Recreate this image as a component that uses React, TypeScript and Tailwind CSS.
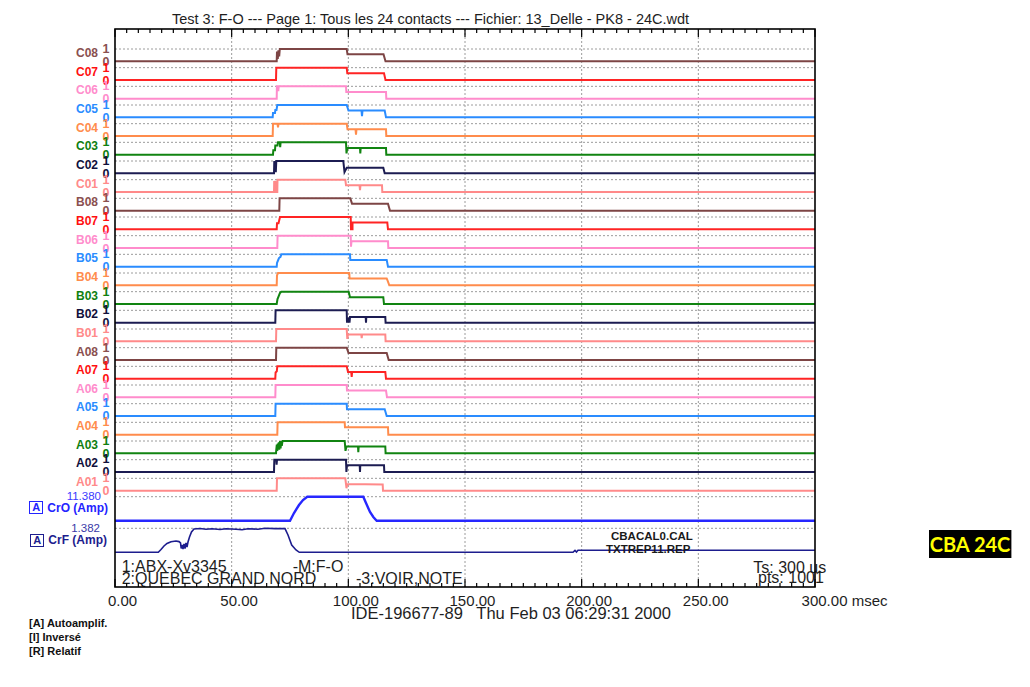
import React from "react";

type Pt = [number, number];

// coordonnées absolues de la page -> repère local du tracé
const X0 = 115;
const Y0 = 29;
const ROW = 18.667;
const HIGH = 12.33;
const W = 700;
const H = 558;

const base = (i: number) => 61.33 + ROW * i - Y0;

const PALETTE = [
  { stroke: "#7d4545", text: "text-[#8a5050]" },
  { stroke: "#ff2424", text: "text-[#ff1010]" },
  { stroke: "#ff8ccc", text: "text-[#ff8ccc]" },
  { stroke: "#2a8cff", text: "text-[#2a8cff]" },
  { stroke: "#ff8c4c", text: "text-[#ff8c4c]" },
  { stroke: "#118411", text: "text-[#108010]" },
  { stroke: "#1c1c52", text: "text-[#10103c]" },
  { stroke: "#ff8a8a", text: "text-[#ff8a8a]" },
];

// points [x absolu, niveau] ; 0 = repos, 1 = haut
const WAVES: Pt[][] = [
  // C08
  [[115, 0], [276.7, 0], [277, 0.8], [277.8, 0.2], [278.4, 0.9], [279.2, 0.4], [279.8, 1], [346.7, 1], [347.5, 0.57], [383.5, 0.57], [385.5, 0], [815, 0]],
  // C07
  [[115, 0], [276, 0], [276.3, 1], [346.7, 1], [347.3, 0.55], [384, 0.55], [385.5, 0], [815, 0]],
  // C06
  [[115, 0], [276.7, 0], [276.9, 1], [278, 1], [278.3, 0.6], [278.7, 1], [346, 1], [346.3, 0.55], [386, 0.55], [386.3, 0], [815, 0]],
  // C05
  [[115, 0], [272.7, 0], [273, 0.35], [275, 0.35], [275.3, 0.6], [276.5, 0.6], [277.3, 1], [346.7, 1], [348.5, 0.55], [361.5, 0.55], [362, 0.1], [362.5, 0.55], [384.7, 0.55], [386, 0], [815, 0]],
  // C04
  [[115, 0], [272.7, 0], [273, 1], [277.5, 1], [278, 0.7], [278.5, 1], [346.7, 1], [347.5, 0.55], [355.5, 0.55], [356, 0.1], [356.5, 0.55], [386, 0.55], [386.3, 0], [815, 0]],
  // C03
  [[115, 0], [273, 0], [273.3, 0.35], [275, 0.35], [275.3, 0.75], [277.5, 0.75], [278, 1], [279.8, 1], [280.2, 0.6], [280.6, 1], [346, 1], [346.5, 0.1], [347.3, 0.55], [360, 0.55], [360.3, 0.1], [360.7, 0.55], [386, 0.55], [386.3, 0], [815, 0]],
  // C02
  [[115, 0], [274, 0], [274.3, 1], [274.8, 0.1], [275.3, 1], [275.8, 0.1], [276.3, 1], [343.3, 1], [344.5, 0.1], [346.7, 0.45], [383.3, 0.45], [384.7, 0], [815, 0]],
  // C01
  [[115, 0], [274, 0], [274.2, 0.9], [274.6, 0], [275.2, 0], [275.4, 0.9], [275.8, 0], [277.3, 0], [277.5, 1], [345.3, 1], [346, 0.55], [359.5, 0.55], [360, 0.15], [360.5, 0.55], [382, 0.55], [382.3, 0], [815, 0]],
  // B08
  [[115, 0], [279.3, 0], [279.6, 1], [350.3, 1], [352, 0.57], [388, 0.57], [390, 0], [815, 0]],
  // B07
  [[115, 0], [276.7, 0], [277, 0.5], [278.5, 0.5], [280, 1], [350.7, 1], [351, 0], [352.5, 0], [352.5, 0.55], [387.3, 0.55], [388, 0], [815, 0]],
  // B06
  [[115, 0], [277.3, 0], [277.6, 1], [350.7, 1], [351, 0.1], [351.5, 0.55], [388, 0.55], [388.3, 0], [815, 0]],
  // B05
  [[115, 0], [276.7, 0], [277, 0.3], [278, 0.5], [279, 0.7], [280.5, 0.8], [281.3, 1], [350, 1], [350.3, 0.55], [386.7, 0.55], [388, 0], [815, 0]],
  // B04
  [[115, 0], [276.7, 0], [277, 0.8], [278, 1], [349.3, 1], [349.6, 0.55], [386.7, 0.55], [387.5, 0.4], [389.3, 0], [815, 0]],
  // B03
  [[115, 0], [276.7, 0], [277.5, 0.4], [279, 0.7], [280, 0.9], [281.3, 1], [348.7, 1], [350, 0.55], [383.3, 0.55], [384, 0], [815, 0]],
  // B02
  [[115, 0], [275.3, 0], [275.6, 1], [346.7, 1], [347, 0], [347.7, 0.4], [348.3, 0], [348.9, 0.4], [349.5, 0], [350, 0.45], [365.7, 0.45], [366, 0], [366.3, 0.45], [385.3, 0.45], [385.6, 0], [815, 0]],
  // B01
  [[115, 0], [276, 0], [276.3, 1], [346.7, 1], [347.3, 0.2], [348, 0.55], [361.3, 0.55], [361.7, 0.25], [362.1, 0.55], [385.3, 0.55], [385.6, 0], [815, 0]],
  // A08
  [[115, 0], [276, 0], [276.3, 1], [346.7, 1], [348.5, 0.57], [386.7, 0.57], [388.7, 0], [815, 0]],
  // A07
  [[115, 0], [275.3, 0], [275.6, 0.5], [276.8, 0.6], [277.3, 1], [346.7, 1], [348, 0.55], [351.2, 0.55], [351.7, 0.15], [352.1, 0.55], [385.3, 0.55], [386, 0], [815, 0]],
  // A06
  [[115, 0], [275.3, 0], [275.6, 1], [346.7, 1], [347, 0.55], [386, 0.55], [387, 0], [815, 0]],
  // A05
  [[115, 0], [275.3, 0], [275.6, 1], [346.7, 1], [347, 0.55], [384.7, 0.55], [386.7, 0], [815, 0]],
  // A04
  [[115, 0], [277.3, 0], [277.6, 1], [344.7, 1], [345, 0.6], [388, 0.6], [388.3, 0], [815, 0]],
  // A03
  [[115, 0], [276, 0], [276.3, 0.3], [276.8, 0.7], [277.3, 0.2], [277.8, 0.8], [278.3, 0.3], [278.8, 0.9], [279.3, 0.3], [280, 1], [280.6, 0.4], [281.2, 1], [281.8, 0.6], [282.5, 1], [344.7, 1], [345.5, 0.2], [346.5, 0.55], [358, 0.55], [358.3, 0.1], [358.7, 0.55], [385.3, 0.55], [385.6, 0], [815, 0]],
  // A02
  [[115, 0], [274, 0], [274.3, 1], [276.2, 1], [276.6, 0.6], [277, 1], [346, 1], [346.4, 0], [347, 0.55], [359.7, 0.55], [360, 0], [360.3, 0.55], [384, 0.55], [384.3, 0], [815, 0]],
  // A01
  [[115, 0], [276.7, 0], [277, 1], [345.3, 1], [346.5, 0.2], [347.3, 0.55], [382.7, 0.5], [383, 0], [815, 0]],
];

const NAMES = ["C", "B", "A"].flatMap((g) => ["08", "07", "06", "05", "04", "03", "02", "01"].map((n) => g + n));

const CRO: Pt[] = [
  [115, 520.7], [290, 520.7], [294, 513], [299, 505], [303, 500], [307.3, 496.7], [363.3, 496.7], [366, 503], [370, 512], [373.3, 517], [376.7, 520.7], [815, 520.7],
];

const CRF: Pt[] = [
  [115, 552.3], [158.3, 552.3], [161, 549.5], [164, 546], [167, 543.5], [171, 541.7], [176, 541], [179, 541.6], [180.5, 543], [181.2, 548.5], [182, 545], [183, 549], [184, 544], [185, 548.5], [186, 543], [187, 547], [188, 542], [189.5, 537], [191.5, 532], [194, 529], [200, 528.5], [206, 529.3], [212, 528.8], [220, 529.5], [226, 528.7], [236, 529.3], [242, 529.7], [248, 528.7], [258, 529.2], [265, 528.3], [275, 528.6], [285, 528.6], [288, 535], [291.7, 545], [296, 550], [299.3, 552.3], [573, 552.3], [575, 550.4], [576.5, 552], [578, 550.3], [815, 550.3],
];

const toPath = (pts: Pt[], y: (v: number) => number) =>
  pts.map(([x, v], k) => `${k ? "L" : "M"}${(x - X0).toFixed(2)},${y(v).toFixed(2)}`).join(" ");

const TICKS = Array.from({ length: 61 }, (_, k) => k);
const GRID_X = [1, 2, 3, 4, 5].map((k) => (k * W) / 6);

function Plot() {
  return (
    <svg width={702} height={560} viewBox="-1 -1 702 560" className="shrink-0 overflow-visible">
      {/* quadrillage pointillé */}
      <g stroke="#9c9c9c" strokeWidth={1} strokeDasharray="2 2">
        {WAVES.map((_, i) => (
          <line key={i} x1={0} x2={W} y1={base(i) - HIGH} y2={base(i) - HIGH} />
        ))}
        <line x1={0} x2={W} y1={467.7} y2={467.7} />
        <line x1={0} x2={W} y1={499.3} y2={499.3} />
        {GRID_X.map((x) => (
          <line key={x} x1={x} x2={x} y1={0} y2={H} />
        ))}
      </g>

      {/* voies logiques */}
      <g fill="none" strokeWidth={2} strokeLinejoin="miter">
        {WAVES.map((pts, i) => (
          <path key={i} d={toPath(pts, (v) => base(i) - v * HIGH)} stroke={PALETTE[i % 8].stroke} />
        ))}
      </g>

      {/* voies analogiques */}
      <path d={toPath(CRO, (v) => v - Y0)} fill="none" stroke="#2727ff" strokeWidth={2.4} />
      <path d={toPath(CRF, (v) => v - Y0)} fill="none" stroke="#1d1d8e" strokeWidth={1.6} />

      {/* textes dans le tracé */}
      <g fill="#1e1e1e" fontSize={16}>
        <text x={6.7} y={543.4}>1:ABX-Xv3345</text>
        <text x={177.7} y={543.4}>-M:F-O</text>
        <text x={6.7} y={555}>2:QUEBEC GRAND NORD</text>
        <text x={241} y={555}>-3:VOIR,NOTE</text>
        <text x={638.3} y={544.4}>Ts: 300 us</text>
        <text x={643} y={554.4}>pts: 1001</text>
      </g>
      <g fill="#1a1a1a" fontSize={11.5} fontWeight={700}>
        <text x={496} y={511.1}>CBACAL0.CAL</text>
        <text x={491} y={524.4}>TXTREP11.REP</text>
      </g>

      {/* cadre et graduations */}
      <rect x={0} y={0} width={W} height={H} fill="none" stroke="#000" strokeWidth={1.6} />
      <g stroke="#000" strokeWidth={1.2}>
        {TICKS.map((k) => {
          const x = (k * W) / 60;
          const len = k % 10 === 0 ? 8 : 4;
          return (
            <g key={k}>
              <line x1={x} x2={x} y1={0} y2={len} />
              <line x1={x} x2={x} y1={H} y2={H - len} />
            </g>
          );
        })}
      </g>
    </svg>
  );
}

function ChannelLabels() {
  return (
    <div className="w-[114px] shrink-0 pt-[18px]">
      {NAMES.map((name, i) => {
        const c = PALETTE[i % 8].text;
        return (
          <div key={name} className="flex h-[18.667px]">
            <div className={`w-[98px] text-right text-[12px] leading-[15px] font-bold ${c}`}>{name}</div>
            <div className={`-mt-[3px] ml-[1px] flex w-[14px] flex-col items-center text-[12.5px] leading-[13px] font-bold ${c}`}>
              <span>1</span>
              <span>0</span>
            </div>
          </div>
        );
      })}

      <div className="-mt-[4px] flex flex-col items-end">
        <div className="pr-[13px] text-[11.5px] leading-[12px] text-[#3a3aff]">11.380</div>
        <div className="flex h-[12px] items-center gap-[4px] pr-[6px] text-[12px] font-bold text-[#2424ff]">
          <span className="flex h-[13px] w-[14px] items-center justify-center border-[1.5px] border-[#2424ff] text-[11px] leading-none">A</span>
          <span>CrO (Amp)</span>
        </div>
        <div className="mt-[8.7px] pr-[14px] text-[11.5px] leading-[12px] text-[#3a3aa8]">1.382</div>
        <div className="flex h-[12px] items-center gap-[4px] pr-[7px] text-[12px] font-bold text-[#1d1d8e]">
          <span className="flex h-[13px] w-[14px] items-center justify-center border-[1.5px] border-[#1d1d8e] text-[11px] leading-none">A</span>
          <span>CrF (Amp)</span>
        </div>
      </div>
    </div>
  );
}

const X_LABELS = ["0.00", "50.00", "100.00", "150.00", "200.00", "250.00"];

export default function App() {
  return (
    <div className="relative h-[687px] w-[1030px] overflow-hidden bg-white font-['Liberation_Sans',Arial,sans-serif] text-[#1e1e1e]">
      <div className="h-[28px] whitespace-nowrap pl-[172px] pt-[11px] text-[14.5px] leading-[16px]">
        Test 3: F-O --- Page 1: Tous les 24 contacts --- Fichier: 13_Delle - PK8 - 24C.wdt
      </div>

      <div className="flex h-[560px]">
        <ChannelLabels />
        <Plot />
        <div className="flex-1 pl-[113px] pt-[502px]">
          <div className="flex h-[28px] w-[83px] items-center justify-center border-r border-[#9a9a9a] bg-black font-['Lato',sans-serif] text-[20px] font-bold text-[#ffff00]">
            CBA 24C
          </div>
        </div>
      </div>

      <div className="flex pl-[64.17px] pt-[5px] text-[15px] leading-[16px]">
        {X_LABELS.map((l) => (
          <div key={l} className="w-[116.667px] text-center">{l}</div>
        ))}
        <div className="w-[140px] whitespace-nowrap pl-[37.5px]">300.00 msec</div>
      </div>

      <div className="-mt-[4px] whitespace-pre pl-[351px] text-[16.5px] leading-[16px]">
        IDE-196677-89   Thu Feb 03 06:29:31 2000
      </div>

      <div className="-mt-[5px] pl-[29px] text-[11px] font-bold leading-[14px] text-[#111]">
        <div>[A] Autoamplif.</div>
        <div>[I] Inversé</div>
        <div>[R] Relatif</div>
      </div>
    </div>
  );
}
